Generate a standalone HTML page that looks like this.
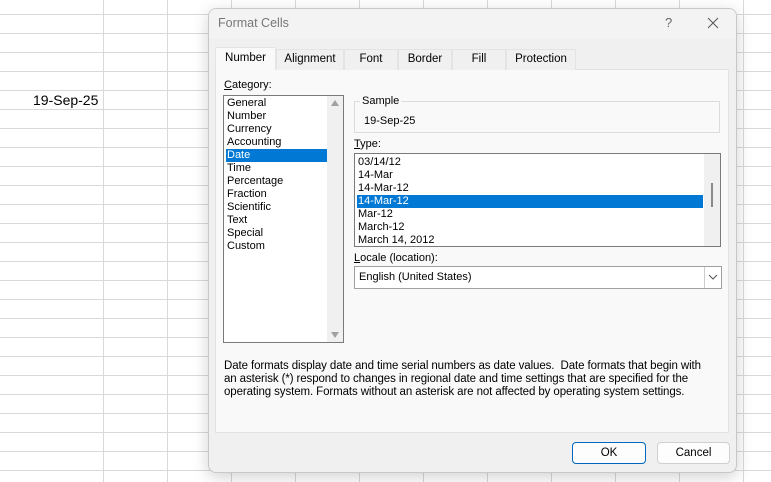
<!DOCTYPE html>
<html><head><style>
*{margin:0;padding:0;box-sizing:border-box}
body{width:771px;height:482px;overflow:hidden;background:#fff;font-family:"Liberation Sans",sans-serif;font-size:11px;color:#000;position:relative}
.grid{position:absolute;inset:0;background-image:linear-gradient(to bottom,transparent 14px,#d9d9d9 14px,#d9d9d9 15px,transparent 15px);background-size:100% 19px;}
.v{position:absolute;top:0;bottom:0;width:1px;background:#d9d9d9}
.a{position:absolute;white-space:nowrap}
.dlg{position:absolute;left:208px;top:8px;width:529px;height:465px;background:#f0f0f0;border:1px solid #c8c8c8;border-radius:8px;box-shadow:0 4px 16px rgba(0,0,0,.18);overflow:hidden}
.title{position:absolute;left:0;top:0;right:0;height:30px;background:#f3f3f3}
.panel{position:absolute;left:6px;top:60px;width:514px;height:364px;background:#f9f9f9;border:1px solid #e2e2e2}
.tab{position:absolute;top:40px;height:21px;border:1px solid #e4e4e4;border-bottom:none;background:#f0f0f0;text-align:center;line-height:19px;font-size:11.5px}
.box{position:absolute;background:#fff;border:1px solid #7a7a7a}
.it{position:absolute;left:2px;height:13px;line-height:13px;font-size:11px;padding-left:1px}
.sel{background:#0078d4;color:#fff}
.btn{position:absolute;height:22px;background:#fdfdfd;border:1px solid #d0d0d0;border-radius:4px;text-align:center;line-height:20px;font-size:11.5px}
</style></head><body>
<div class="grid"></div>
<div class="v" style="left:103px"></div>
<div class="v" style="left:167px"></div><div class="v" style="left:231px"></div><div class="v" style="left:295px"></div><div class="v" style="left:359px"></div><div class="v" style="left:423px"></div><div class="v" style="left:487px"></div><div class="v" style="left:551px"></div><div class="v" style="left:615px"></div><div class="v" style="left:679px"></div><div class="v" style="left:743px"></div>
<div class="a" style="left:33px;top:92px;font-size:14px">19-Sep-25</div>
<div class="dlg">
 <div class="title"></div>
 <div class="a" style="left:9px;top:7px;font-size:12.5px;color:#777">Format Cells</div>
 <div class="a" style="left:456px;top:6px;font-size:13px;color:#666">?</div>
 <svg class="a" style="left:498px;top:8px" width="12" height="12"><path d="M1 1L11 11M11 1L1 11" stroke="#555" stroke-width="1"/></svg>
 <div class="panel"></div>
 <div class="tab" style="left:6px;top:38px;width:61px;height:23px;background:#f9f9f9;line-height:21px;z-index:2">Number</div>
 <div class="tab" style="left:67px;width:68px">Alignment</div>
 <div class="tab" style="left:135px;width:54px">Font</div>
 <div class="tab" style="left:189px;width:54px">Border</div>
 <div class="tab" style="left:243px;width:54px">Fill</div>
 <div class="tab" style="left:297px;width:70px">Protection</div>
 <div class="a" style="left:15px;top:70px"><u>C</u>ategory:</div>
 <div class="box" style="left:14px;top:86px;width:121px;height:248px">
  <div style="position:absolute;right:0;top:0;width:16px;height:246px;background:#f0f0f0"></div>
  <div class="a" style="right:4px;top:4px;width:0;height:0;border-left:4px solid transparent;border-right:4px solid transparent;border-bottom:6px solid #a0a0a0"></div>
  <div class="a" style="right:4px;bottom:4px;width:0;height:0;border-left:4px solid transparent;border-right:4px solid transparent;border-top:6px solid #a0a0a0"></div>
  <div class="it" style="top:1px">General</div><div class="it" style="top:14px">Number</div><div class="it" style="top:27px">Currency</div><div class="it" style="top:40px">Accounting</div>
  <div class="it sel" style="top:53px;width:101px">Date</div><div class="it" style="top:66px">Time</div><div class="it" style="top:79px">Percentage</div><div class="it" style="top:92px">Fraction</div><div class="it" style="top:105px">Scientific</div><div class="it" style="top:118px">Text</div><div class="it" style="top:131px">Special</div><div class="it" style="top:144px">Custom</div>
 </div>
 <div class="a" style="left:145px;top:92px;width:366px;height:32px;border:1px solid #dcdcdc"></div>
 <div class="a" style="left:151px;top:86px;background:#f9f9f9;padding:0 2px">Sample</div>
 <div class="a" style="left:155px;top:106px">19-Sep-25</div>
 <div class="a" style="left:145px;top:129px"><u>T</u>ype:</div>
 <div class="box" style="left:145px;top:144px;width:367px;height:94px">
  <div style="position:absolute;right:0;top:0;width:16px;height:92px;background:#f0f0f0"></div>
  <div style="position:absolute;right:7px;top:29px;width:2px;height:24px;background:#8a8a8a"></div>
  <div class="it" style="top:2px">03/14/12</div><div class="it" style="top:15px">14-Mar</div><div class="it" style="top:28px">14-Mar-12</div>
  <div class="it sel" style="top:41px;width:346px">14-Mar-12</div>
  <div class="it" style="top:54px">Mar-12</div><div class="it" style="top:67px">March-12</div><div class="it" style="top:80px">March 14, 2012</div>
 </div>
 <div class="a" style="left:145px;top:243px"><u>L</u>ocale (location):</div>
 <div class="box" style="left:145px;top:257px;width:368px;height:23px;border-color:#a0a0a0">
  <div class="a" style="left:4px;top:4px">English (United States)</div>
  <div style="position:absolute;right:0;top:0;width:17px;height:21px;border-left:1px solid #ccc"></div>
  <svg class="a" style="right:3px;top:7px" width="10" height="7"><path d="M1 1L5 5L9 1" stroke="#555" fill="none"/></svg>
 </div>
 <div class="a" style="left:15px;top:351px;line-height:13px;font-size:11.5px;letter-spacing:-0.1px">Date formats display date and time serial numbers as date values.&nbsp; Date formats that begin with<br>an asterisk (*) respond to changes in regional date and time settings that are specified for the<br>operating system. Formats without an asterisk are not affected by operating system settings.</div>
 <div class="btn" style="left:363px;top:433px;width:74px;border:1px solid #0067c0">OK</div>
 <div class="btn" style="left:448px;top:433px;width:73px">Cancel</div>
</div>
</body></html>
